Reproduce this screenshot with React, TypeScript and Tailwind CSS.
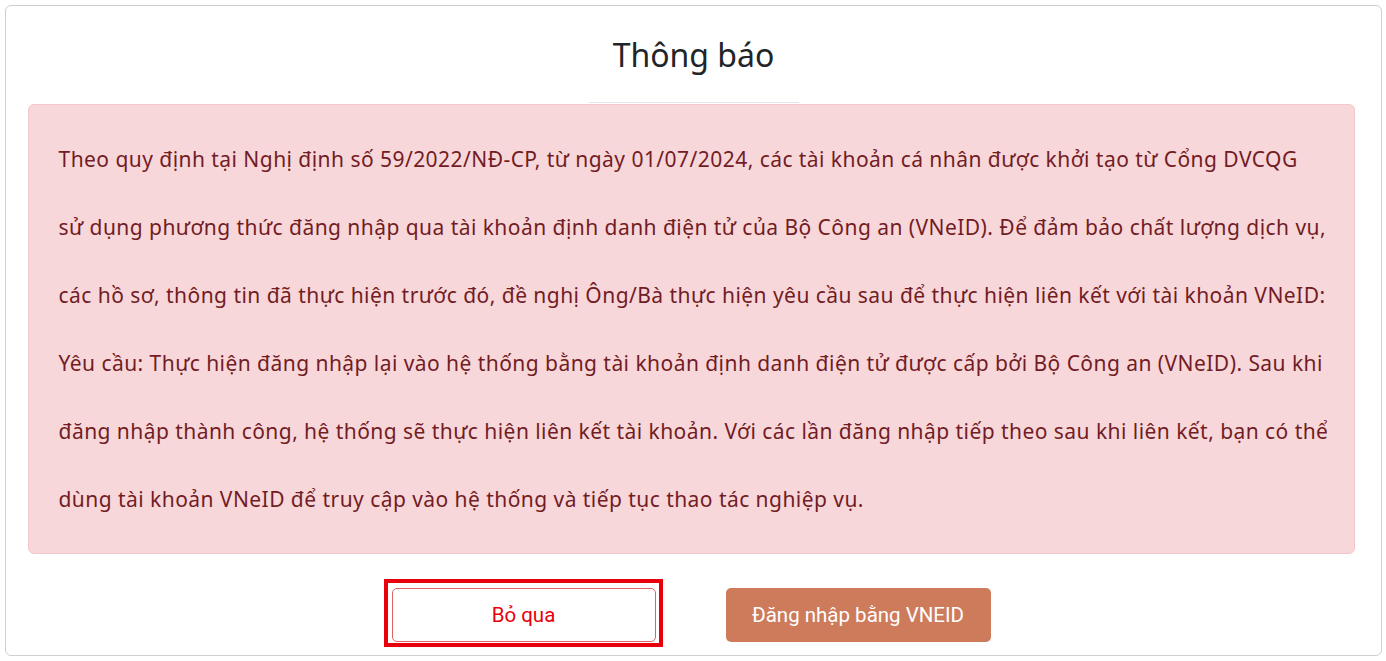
import React from 'react';

const lines = [
  'Theo quy định tại Nghị định số 59/2022/NĐ-CP, từ ngày 01/07/2024, các tài khoản cá nhân được khởi tạo từ Cổng DVCQG',
  'sử dụng phương thức đăng nhập qua tài khoản định danh điện tử của Bộ Công an (VNeID). Để đảm bảo chất lượng dịch vụ,',
  'các hồ sơ, thông tin đã thực hiện trước đó, đề nghị Ông/Bà thực hiện yêu cầu sau để thực hiện liên kết với tài khoản VNeID:',
  'Yêu cầu: Thực hiện đăng nhập lại vào hệ thống bằng tài khoản định danh điện tử được cấp bởi Bộ Công an (VNeID). Sau khi',
  'đăng nhập thành công, hệ thống sẽ thực hiện liên kết tài khoản. Với các lần đăng nhập tiếp theo sau khi liên kết, bạn có thể',
  'dùng tài khoản VNeID để truy cập vào hệ thống và tiếp tục thao tác nghiệp vụ.',
];

export default function App() {
  return (
    <div className="min-h-[661px] w-[1386px] bg-white p-[5px] font-['Noto_Sans',sans-serif]">
      <div className="flex h-[651px] w-[1377px] flex-col items-center rounded-md border border-[#cfcfcf] bg-white">
        {/* Title */}
        <h1 className="mt-[27px] text-[32px] leading-[44px] text-[#212529]">Thông báo</h1>
        <div className="mt-[25px] h-px w-[210px] bg-[#e4e2ea]" />

        {/* Alert */}
        <div className="mt-[1px] ml-[-5px] w-[1327px] rounded-md border border-[#f5c6cb] bg-[#f8d7da] px-[30px] pt-[20px] pb-[20px] text-[#721c24]">
          {lines.map((l, i) => (
            <p key={i} className="whitespace-nowrap text-[21px] leading-[68px] tracking-[0.45px]">
              {l}
            </p>
          ))}
        </div>

        {/* Actions */}
        <div className="mt-[25px] flex items-start gap-[63px] pr-[13px]">
          <div className="border-[4px] border-[#e8000b] pt-[5px] pr-[3px] pb-[1px] pl-[4px]">
            <button className="h-[54px] w-[264px] rounded-[5px] border border-[#e06262] bg-white font-['Roboto',sans-serif] text-[20.5px] text-[#e8000b]">
              Bỏ qua
            </button>
          </div>
          <button className="mt-[9px] h-[54px] w-[265px] rounded-[5px] bg-[#cd7b5b] font-['Roboto',sans-serif] text-[20.5px] text-white">
            Đăng nhập bằng VNEID
          </button>
        </div>
      </div>
    </div>
  );
}
